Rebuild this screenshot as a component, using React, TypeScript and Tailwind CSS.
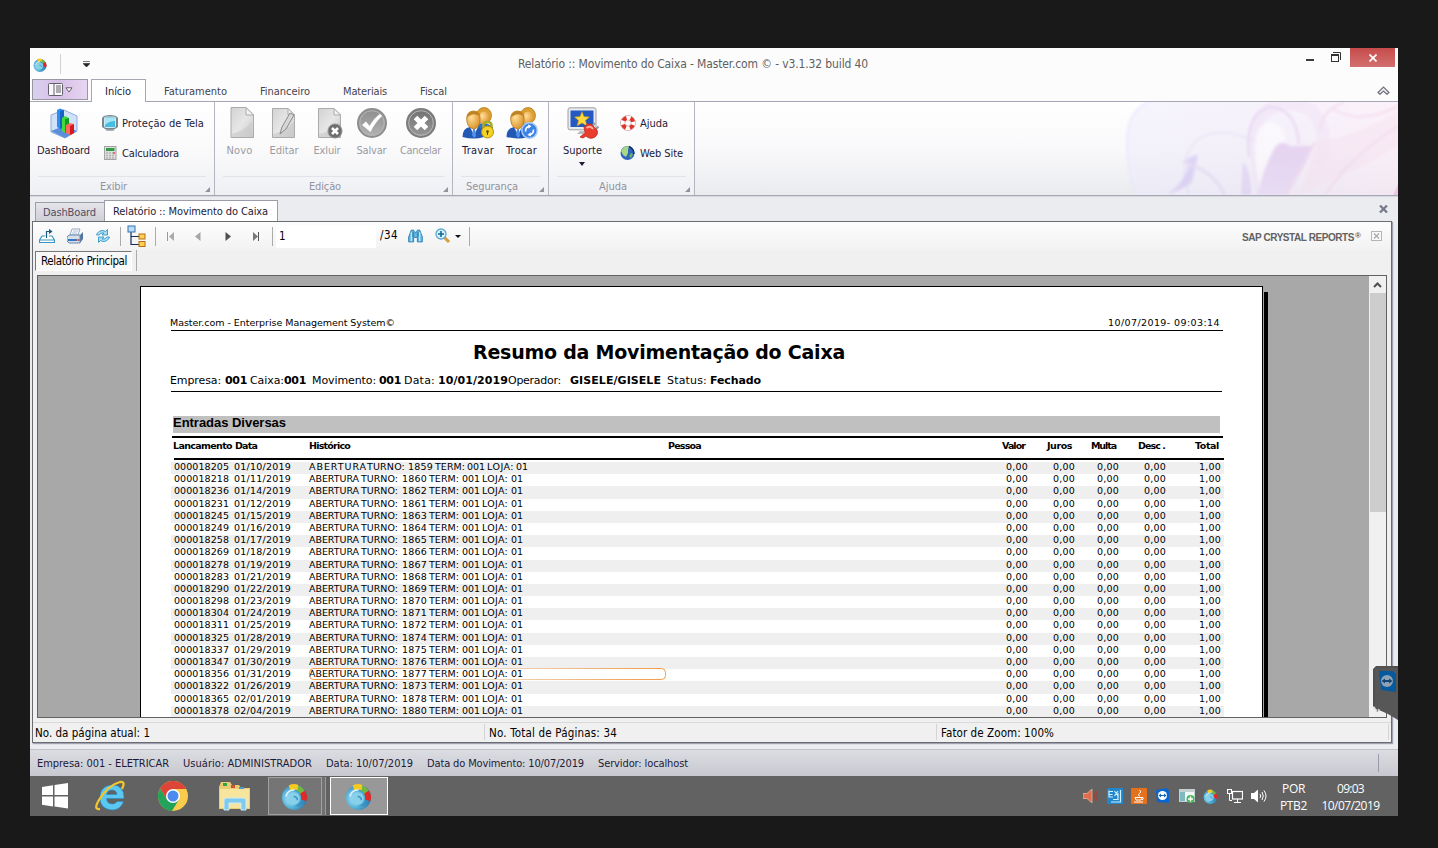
import { useLayoutEffect, useRef, useState } from "react";
import type { ReactNode } from "react";

/* Text spread evenly over the width that its class gives. */
function Fit({ children, className = "" }: { children: string; className?: string }) {
  const box = useRef<HTMLSpanElement>(null);
  const inner = useRef<HTMLSpanElement>(null);
  const [spacing, setSpacing] = useState(0);
  useLayoutEffect(() => {
    if (!box.current || !inner.current) return;
    inner.current.style.letterSpacing = "0px";
    const natural = inner.current.getBoundingClientRect().width;
    const gap = (box.current.clientWidth - natural) / children.length;
    inner.current.style.letterSpacing = gap + "px";
    setSpacing(gap);
  }, [children]);
  return (
    <span ref={box} className={"block shrink-0 whitespace-nowrap " + className}>
      <span ref={inner} style={{ letterSpacing: spacing }}>{children}</span>
    </span>
  );
}

function Ball({ className }: { className: string }) {
  return (
    <svg viewBox="0 0 28 28" className={className}>
      <defs>
        <radialGradient id="ball" cx="35%" cy="55%" r="70%">
          <stop offset="0" stopColor="#bfeaf8" />
          <stop offset=".5" stopColor="#58b4da" />
          <stop offset="1" stopColor="#1d6ea6" />
        </radialGradient>
      </defs>
      <circle cx="14" cy="15" r="13" fill="url(#ball)" />
      <path d="M14 8 Q21 9 21 16 Q20 22 13 24 Q22 25 26 19 L25 9 L18 5 L10 5Z" fill="#2f86bb" opacity=".6" />
      <path d="M8 2.500 Q13 0 18 2 L18 8 Q14 6 10 8.500Z" fill="#f6c921" />
      <path d="M18 2.500 Q23 4.500 25 9 L20 12 Q19 9 17 8Z" fill="#74b543" />
      <path d="M24.500 8 Q29 14 26 19 L21 17 Q21 13 20 11Z" fill="#e02a25" />
      <circle cx="13" cy="16" r="6.500" fill="#86d0ea" />
      <path d="M5 14 Q7 7 14 7" fill="none" stroke="#d8f3fb" strokeWidth="1.800" />
      <path d="M13 14 Q17 14 17 18" fill="none" stroke="#4196c2" strokeWidth="1.600" />
    </svg>
  );
}

function DashIcon() {
  return (
    <svg viewBox="0 0 32 32" className="h-8 w-8">
      <path d="M3 8 L16 3 L29 9 L29 24 L17 31 L3 25Z" fill="#cfe2fa" stroke="#8fa9dc" />
      <path d="M3 24 L16 19 L29 24 L17 31Z" fill="#5a8ddc" />
      <path d="M9 3 L12 1.500 L16 3 L16 20 L12 22 L9 20Z" fill="#2f8df0" />
      <path d="M12 4 L16 3 L16 20 L12 22Z" fill="#1663c4" />
      <path d="M14 11 L17 9 L21 11 L21 24 L17 26 L14 24Z" fill="#3fdc3f" />
      <path d="M17 12 L21 11 L21 24 L17 26Z" fill="#139a20" />
      <path d="M18 18 L22 16 L26 17 L26 26 L22 28 L18 26Z" fill="#ff6a5c" />
      <path d="M22 19 L26 17 L26 26 L22 28Z" fill="#d8161b" />
    </svg>
  );
}

function PageIcon({ kind }: { kind: "new" | "edit" | "delete" }) {
  return (
    <svg viewBox="0 0 32 32" className="h-8 w-8">
      <defs>
        <linearGradient id="paper" x1="0" y1="0" x2="1" y2="1">
          <stop offset="0" stopColor="#d2d2d2" />
          <stop offset=".5" stopColor="#e6e6e6" />
          <stop offset="1" stopColor="#c9c9c9" />
        </linearGradient>
      </defs>
      <path d={kind === "new" ? "M5 .5 H20 L27.500 8 V30.500 H5Z" : "M4.500 1.500 H20 L26.500 8 V30.500 H4.500Z"} fill="url(#paper)" stroke="#ababab" />
      <path d={kind === "new" ? "M20 .5 V8 H27.500Z" : "M20 1.500 V8 H26.500Z"} fill="#f3f3f3" stroke="#ababab" />
      <path d="M5 27 Q18 25 26 14 V30 H5Z" fill="#c6c6c6" opacity=".55" />
      {kind === "edit" && (
        <path d="M22 6 L26 8 L18 22 L12 27 L14 20Z" fill="#d7d7d7" stroke="#8b8b8b" />
      )}
      {kind === "delete" && (
        <g>
          <circle cx="21" cy="24" r="7" fill="#6d6d6d" stroke="#919191" />
          <path d="M18 21 L24 27 M24 21 L18 27" stroke="#fff" strokeWidth="2.600" />
        </g>
      )}
    </svg>
  );
}

function RoundIcon({ ok }: { ok: boolean }) {
  return (
    <svg viewBox="0 0 32 32" className="h-8 w-8">
      <defs>
        <linearGradient id={ok ? "ringA" : "ringB"} x1="0" y1="0" x2="0" y2="1">
          <stop offset="0" stopColor={ok ? "#8d8d8d" : "#707070"} />
          <stop offset="1" stopColor={ok ? "#b4b4b4" : "#999"} />
        </linearGradient>
      </defs>
      <circle cx="16" cy="16" r="14" fill={ok ? "url(#ringA)" : "url(#ringB)"} stroke={ok ? "#8e8e8e" : "#7d7d7d"} strokeWidth="2" />
      <circle cx="16" cy="16" r="12.300" fill="none" stroke="#b8b8b8" />
      {ok ? (
        <path d="M6 18 L10 14.500 L13.500 19 Q18 11 24 7 L26 9 Q18 17 14.500 25Z" fill="#fff" />
      ) : (
        <path d="M10.500 10.500 L21.500 21.500 M21.500 10.500 L10.500 21.500" stroke="#fff" strokeWidth="5" />
      )}
    </svg>
  );
}

function PeopleIcon({ lock }: { lock: boolean }) {
  return (
    <svg viewBox="0 0 32 32" className="h-8 w-8">
      <defs>
        <radialGradient id="face" cx="35%" cy="35%" r="75%">
          <stop offset="0" stopColor="#ffe09a" />
          <stop offset="1" stopColor="#d98d22" />
        </radialGradient>
      </defs>
      <path d="M14 18 Q22 13 31 20 V26 H14Z" fill="#3271ce" />
      <ellipse cx="22" cy="8.500" rx="7.500" ry="8" fill="#dba02f" stroke="#a87216" strokeWidth=".7" />
      <ellipse cx="22" cy="11" rx="5.500" ry="6.500" fill="url(#face)" />
      <path d="M.5 30 Q.5 21 8 20 L16 20 Q23 22 22 30 Q12 33 .5 30Z" fill="#2359b4" />
      <path d="M8 20 L12 28 L16 20Z" fill="#fff" />
      <path d="M11 22 L13 22 L14 29 L12 31 L10 28Z" fill="#4f92ea" />
      <path d="M5 15 Q3 5 11 4 Q18 4 18 12 Q18 21 12 22 Q6 21 5 15Z" fill="url(#face)" stroke="#b67a1b" strokeWidth=".8" />
      <path d="M5 11 Q5 4 12 4 Q17 4 18 9 Q12 6 9 8 Q6 9 5 11Z" fill="#c08222" />
      {lock ? (
        <g>
          <path d="M21.500 21 V18.500 Q21.500 15 25.500 15 Q29.500 15 29.500 18.500 V21" fill="none" stroke="#a3ad2a" strokeWidth="2.500" />
          <circle cx="25.500" cy="25" r="6" fill="#f4d324" stroke="#b8930f" />
          <circle cx="25.500" cy="24.500" r="1.300" fill="#5e4706" /><path d="M25 24.500 h1 v3.500 h-1Z" fill="#5e4706" />
        </g>
      ) : (
        <g>
          <circle cx="23.500" cy="23.500" r="7.700" fill="#3d83e6" stroke="#a6ccfa" strokeWidth="1.500" />
          <path d="M19.500 24.500 Q19.500 20 23 19.500 M27.500 22.500 Q27.500 27 24 27.500" fill="none" stroke="#fff" strokeWidth="1.600" />
          <path d="M22 17.500 L25.500 19 L22.500 21.800Z M25 29.500 L21.500 28 L24.500 25.200Z" fill="#fff" />
        </g>
      )}
    </svg>
  );
}

function SupportIcon() {
  return (
    <svg viewBox="0 0 32 32" className="h-8 w-8">
      <rect x="1" y=".8" width="28" height="22" rx="2" fill="#e9ebec" stroke="#9ba0a5" />
      <rect x="3.500" y="3.500" width="23" height="16.500" fill="#2459c4" />
      <path d="M15 4.500 L17 9.500 L22.500 10 L18.500 13.500 L20 19 L15 16 L10 19 L11.500 13.500 L7.500 10 L13 9.500Z" fill="#ffd83d" stroke="#b78e11" strokeWidth=".6" />
      <path d="M13 24 H17 V27 H10Z" fill="#b9bcc0" />
      <path d="M28 16 L24.500 20 M31.500 19.500 L28 23" stroke="#9a9a9a" strokeWidth="2" />
      <path d="M17 20 Q20 16 24 17 L30 23 Q32 27 28 30 Q23 33 19 29 L16 31 L13 30 L18 26Z" fill="#e93d2e" stroke="#c02a1f" strokeWidth=".8" />
      <path d="M19.500 21 Q23 18 26 22" fill="none" stroke="#ffb0a0" strokeWidth="2" />
    </svg>
  );
}

function BigButton({ icon, label, className, labelClass, off }: { icon: ReactNode; label: string; className: string; labelClass: string; off?: boolean }) {
  return (
    <button className={"flex shrink-0 flex-col items-center pt-[5px] " + className}>
      {icon}
      <Fit className={"mt-[5px] h-[14px] text-[11px] leading-[14px] " + (off ? "text-[#9b9ba3] " : "text-[#1d1a38] ") + labelClass}>{label}</Fit>
    </button>
  );
}

function Group({ caption, captionClass, className, children }: { caption: string; captionClass: string; className: string; children: ReactNode }) {
  return (
    <section className={"flex h-[93px] shrink-0 flex-col border-r border-[#b3b5c0] bg-gradient-to-b from-white via-[#fafafb] to-[#eff0f4] " + className}>
      <div className="flex h-[74px]">{children}</div>
      <div className="mx-2 h-px bg-[#e2e3e9]" />
      <div className="flex h-[18px] justify-between pr-[4px]">
        <Fit className={"pt-[2px] text-[11px] leading-[16px] text-[#92929f] " + captionClass}>{caption}</Fit>
        <svg viewBox="0 0 5 5" className="mt-[10px] h-[5px] w-[5px]"><path d="M5 0 V5 H0Z" fill="#92929e" /></svg>
      </div>
    </section>
  );
}

function Ribbon() {
  return (
    <div className="flex h-[94px] border-b border-[#a5a7b4] bg-gradient-to-b from-white via-[#f9f9fb] to-[#eaebef]">
      <Group caption="Exibir" captionClass="ml-[70px] w-[27px]" className="w-[185px]">
        <BigButton icon={<DashIcon />} label="DashBoard" className="ml-[7px] w-[53px]" labelClass="w-[53px]" />
        <div className="ml-[12px] flex flex-col">
          <div className="mt-[13px] flex h-4 items-center">
            <svg viewBox="0 0 16 16" className="h-4 w-4">
              <path d="M2 1 Q8 -1 14 1 L16 3 V12 L13 14 Q8 17 3 14 L0 12 V3Z" fill="#78868d" />
              <rect x="2.500" y="2" width="11" height="10.500" rx="1" fill="#48bde2" stroke="#d0e8ef" />
              <path d="M3 3 H13 V6 Q7 6 3 10Z" fill="#a6e5f5" />
              <path d="M4 15 H12" stroke="#a0a9ad" strokeWidth="1.500" />
            </svg>
            <Fit className="ml-1 w-[82px] pt-[2px] text-[11px] text-[#1d1a38]">Proteção de Tela</Fit>
          </div>
          <div className="mt-[14px] flex h-4 items-center">
            <svg viewBox="0 0 16 16" className="h-4 w-4">
              <rect x="2.500" y="1.500" width="11.500" height="13" fill="#dedede" stroke="#a3a3a3" />
              <rect x="4" y="3" width="8.500" height="3" fill="#2f9c43" />
              <path d="M4 8 H13 M4 10.500 H13 M4 13 H13" stroke="#b3b3b3" strokeDasharray="2 1" strokeWidth="1.500" />
              <path d="M11 8 H13" stroke="#e05555" strokeWidth="1.500" />
            </svg>
            <Fit className="ml-1 w-[57px] pt-[2px] text-[11px] text-[#1d1a38]">Calculadora</Fit>
          </div>
        </div>
      </Group>
      <Group caption="Edição" captionClass="ml-[94px] w-[32px]" className="w-[238px]">
        <BigButton off icon={<PageIcon kind="new" />} label="Novo" className="ml-[8px] w-[38px]" labelClass="mr-[5px] w-[26px]" />
        <BigButton off icon={<PageIcon kind="edit" />} label="Editar" className="ml-[4px] w-[38px]" labelClass="w-[29px]" />
        <BigButton off icon={<PageIcon kind="delete" />} label="Exluir" className="ml-[8px] w-[38px]" labelClass="mr-[6px] w-[27px]" />
        <BigButton off icon={<RoundIcon ok />} label="Salvar" className="ml-[3px] w-[40px]" labelClass="mr-px w-[30px]" />
        <BigButton off icon={<RoundIcon ok={false} />} label="Cancelar" className="ml-[7px] w-[44px]" labelClass="mr-px w-[41px]" />
      </Group>
      <Group caption="Segurança" captionClass="ml-[13px] w-[52px]" className="w-[96px]">
        <BigButton icon={<PeopleIcon lock />} label="Travar" className="ml-[7px] w-[36px]" labelClass="w-[32px]" />
        <BigButton icon={<PeopleIcon lock={false} />} label="Trocar" className="ml-[7px] w-[37px]" labelClass="w-[31px]" />
      </Group>
      <Group caption="Ajuda" captionClass="ml-[50px] w-[28px]" className="w-[146px]">
        <div className="flex flex-col items-center">
          <BigButton icon={<SupportIcon />} label="Suporte" className="ml-[12px] w-[43px]" labelClass="w-[39px]" />
          <svg viewBox="0 0 6 4" className="ml-[11px] mt-[4px] h-1 w-1.5"><path d="M0 0 H6 L3 4Z" fill="#1d1a38" /></svg>
        </div>
        <div className="ml-[16px] flex flex-col">
          <div className="mt-[13px] flex h-4 items-center">
            <svg viewBox="0 0 16 16" className="h-4 w-4">
              <circle cx="8" cy="8" r="5.300" fill="none" stroke="#c08c8c" strokeWidth="5" />
              <circle cx="8" cy="8" r="5.300" fill="none" stroke="#fff" strokeWidth="4" />
              <circle cx="8" cy="8" r="5.300" fill="none" stroke="#df3428" strokeWidth="4" strokeDasharray="4.160 4.160" strokeDashoffset="-2" />
            </svg>
            <Fit className="ml-[4px] w-[28px] pt-[2px] text-[11px] text-[#1d1a38]">Ajuda</Fit>
          </div>
          <div className="mt-[14px] flex h-4 items-center">
            <svg viewBox="0 0 16 16" className="h-4 w-4">
              <circle cx="7.500" cy="8" r="7" fill="#2f65bd" />
              <path d="M1 6 Q4 0 9 1.500 L8 5 L8 8 L6 12 L3 10 Z" fill="#a7d885" />
              <path d="M11 8 L13 9 L11 13 L9 11Z" fill="#6ab75b" />
              <path d="M9 1.500 Q14 4 14 9" fill="none" stroke="#12356f" strokeWidth="1.500" />
            </svg>
            <Fit className="ml-[4px] w-[43px] pt-[2px] text-[11px] text-[#1d1a38]">Web Site</Fit>
          </div>
        </div>
      </Group>
      <svg viewBox="0 0 293 93" className="ml-auto h-[93px] w-[293px] opacity-75">
        <defs>
          <linearGradient id="veil" x1="0" y1="0" x2="1" y2="0">
            <stop offset="0" stopColor="#edebfb" />
            <stop offset=".6" stopColor="#efe6f8" />
            <stop offset="1" stopColor="#fae5f3" />
          </linearGradient>
          <linearGradient id="fold" x1="0" y1="0" x2="0" y2="1">
            <stop offset="0" stopColor="#dfc6ee" />
            <stop offset="1" stopColor="#e6d6f4" />
          </linearGradient>
          <filter id="mist"><feGaussianBlur stdDeviation="1.400" /></filter>
        </defs>
        <path d="M42 0 Q20 12 22 45 Q23 75 32 93 H293 V0Z" fill="url(#veil)" opacity=".7" />
        <path d="M42 0 Q20 12 22 45 Q23 75 32 93" fill="none" stroke="#e8e4fb" strokeWidth="2" filter="url(#mist)" />
        <path d="M84 93 Q72 52 95 36 Q120 24 150 40" fill="none" stroke="#ded9f2" strokeWidth="1.500" filter="url(#mist)" />
        <path d="M56 93 Q74 82 79 62 Q74 58 68 66 Q80 52 88 53 Q84 72 82 80 Q72 88 56 93Z" fill="#cfc0f2" opacity=".8" filter="url(#mist)" transform="translate(5 0)" />
        <path d="M80 62 Q106 66 120 93" fill="none" stroke="#e0d6f0" strokeWidth="3" filter="url(#mist)" />
        <path d="M160 93 Q142 28 158 12 Q180 -6 206 8 Q226 28 214 62" fill="none" stroke="#ecdcf3" strokeWidth="13" opacity=".6" filter="url(#mist)" />
        <path d="M144 55 Q139 14 164 5 Q191 6 194 42" fill="none" stroke="#dfc8ec" strokeWidth="2" filter="url(#mist)" />
        <path d="M156 93 Q139 20 167 20 Q181 24 180 42 Q171 55 157 93Z" fill="#fbf9fd" opacity=".8" filter="url(#mist)" />
        <path d="M152 93 Q162 55 172 43 Q178 38 185 44 H208 Q200 65 181 93Z" fill="url(#fold)" filter="url(#mist)" />
        <path d="M138 60 Q146 68 146 93 H136Z" fill="#d9c9f1" opacity=".8" filter="url(#mist)" />
        <path d="M210 40 Q250 35 293 9 V44 Q250 70 195 93" fill="#f4dded" opacity=".6" filter="url(#mist)" />
        <path d="M216 28 Q216 8 240 0 M228 7 Q255 24 293 4 M220 93 Q245 55 293 24 M210 40 L181 93" fill="none" stroke="#f0d0e8" strokeWidth="2" filter="url(#mist)" />
        <path d="M293 82 L288 93 H293Z" fill="#efbde2" />
      </svg>
    </div>
  );
}

function Separator({ className }: { className: string }) {
  return <span className={"block w-px shrink-0 " + className} />;
}

function Toolbar() {
  return (
    <div className="flex h-[28px] items-center bg-gradient-to-b from-[#fdfdfd] to-[#f2f2f2]">
      <svg viewBox="0 0 16 16" className="ml-[6px] h-4 w-4 shrink-0"><path d="M6 8 H3 L.5 12 V14.500 H15.500 V12 L13 8 H10 M.5 12 H15" fill="#fff" stroke="#3a95c4" strokeWidth="1.200" /><path d="M7.500 10 V3.500 H11" fill="none" stroke="#1f5b80" strokeWidth="1.200" /><path d="M10 .8 L13.500 3.500 L10 6.200Z" fill="#1f5b80" /></svg>
      <svg viewBox="0 0 16 16" className="ml-[12px] h-4 w-4 shrink-0"><path d="M5 1 H13 L11 7 H3Z" fill="#fff" stroke="#9aa9bf" /><path d="M6 3 H11 M5 5 H10" stroke="#a5bfdf" /><path d="M2 7 H13 L16 4 V11 L13 15 H2 L0 13 V9Z" fill="#51759f" /><path d="M2 7 H13 V15 H2 L0 13 V9Z" fill="#d5dfeb" stroke="#6d88ab" /><path d="M1 12 H10" stroke="#3776c2" strokeWidth="2" /><path d="M10.500 12 h2" stroke="#cf5038" strokeWidth="2" /></svg>
      <svg viewBox="0 0 16 16" className="ml-[12px] h-4 w-4 shrink-0"><path d="M1.500 7 Q3 2.500 8 2.500 L10.500 3.500 L12.500 1.500 V7 H7 L9 5 Q5.500 4.500 4 7Z M14.500 9 Q13 13.500 8 13.500 L5.500 12.500 L3.500 14.500 V9 H9 L7 11 Q10.500 11.500 12 9Z" fill="#a9def4" stroke="#3597c4" strokeWidth=".9" /></svg>
      <Separator className="ml-[9px] h-[19px] bg-[#ababab]" />
      <svg viewBox="0 0 20 22" className="ml-[6px] h-[22px] w-5 shrink-0"><path d="M4 7 V19.500 H12 M4 11.500 H12" fill="none" stroke="#162a60" strokeWidth="1.200" /><rect x="1" y="1" width="7" height="6" fill="#b9dcf8" stroke="#3870aa" /><rect x="12" y="9" width="6" height="5" fill="#ffd052" stroke="#b96d13" /><rect x="12" y="16.500" width="6" height="5" fill="#ffd052" stroke="#b96d13" /></svg>
      <Separator className="ml-[8px] h-[19px] bg-[#ababab]" />
      <svg viewBox="0 0 8 9" className="ml-[11px] h-[9px] w-2 shrink-0"><path d="M.5 0 V9" stroke="#999" /><path d="M7 0 V9 L2 4.500Z" fill="#aaa" /></svg>
      <svg viewBox="0 0 6 9" className="ml-[20px] h-[9px] w-1.5 shrink-0"><path d="M5.500 0 V9 L0 4.500Z" fill="#a5a5a5" /></svg>
      <svg viewBox="0 0 6 9" className="ml-[24px] h-[9px] w-1.5 shrink-0"><path d="M.5 0 V9 L6 4.500Z" fill="#505050" /></svg>
      <svg viewBox="0 0 8 9" className="ml-[21px] h-[9px] w-2 shrink-0"><path d="M1 0 V9 L6 4.500Z" fill="#777" /><path d="M6.500 0 V9" stroke="#555" /></svg>
      <Separator className="ml-[12px] h-[19px] bg-[#ababab]" />
      <span className="ml-[3px] h-[23px] w-[100px] bg-white pl-[3px] text-[11.500px] leading-[22px]">1</span>
      <Fit className="ml-[4px] w-[18px] text-[11.500px]">/34</Fit>
      <svg viewBox="0 0 16 14" className="ml-[10px] h-[14px] w-[15px] shrink-0"><path d="M3.500 .7 H6 L7 3 H9 L10 .7 H12.500 L15.300 8 V13.300 H10 V8.500 H6 V13.300 H.7 V8Z" fill="#63b6de" stroke="#2f82b4" /><path d="M3.500 3 V12.500 M12.500 3 V12.500" stroke="#c8eafa" strokeWidth="1.300" /><path d="M5.500 3 V8 M10.500 3 V8" stroke="#1d6798" /></svg>
      <svg viewBox="0 0 16 16" className="ml-[12px] h-4 w-4 shrink-0"><path d="M9 9 L14 14" stroke="#d99c3a" strokeWidth="3" /><circle cx="6" cy="6" r="5" fill="#d9f1fc" stroke="#5ca8d2" strokeWidth="1.300" /><path d="M3 6 H9 M6 3 V9" stroke="#166995" strokeWidth="1.600" /></svg>
      <svg viewBox="0 0 6 3" className="ml-[4px] h-[3px] w-1.5 shrink-0"><path d="M0 0 H6 L3 3Z" fill="#111" /></svg>
      <Separator className="ml-[8px] h-[19px] bg-[#ababab]" />
      <Fit className="ml-auto w-[112px] pt-[3px] font-['Liberation_Sans'] text-[10px] font-bold text-[#626262]">SAP CRYSTAL REPORTS</Fit>
      <Fit className="ml-px w-[6px] font-['Liberation_Sans'] text-[8px] font-bold text-[#626262]">®</Fit>
      <svg viewBox="0 0 11 10" className="ml-[10px] mr-[9px] h-[10px] w-[11px] shrink-0"><rect x=".5" y=".5" width="10" height="9" fill="#f8f8f8" stroke="#b5b5b5" /><path d="M3 2.500 L8 7.500 M8 2.500 L3 7.500" stroke="#aaa" strokeWidth="1.300" /></svg>
    </div>
  );
}

const ENTRIES: [string, string, string][] = [
  ["000018205", "01/10/2019", "1859"],
  ["000018218", "01/11/2019", "1860"],
  ["000018236", "01/14/2019", "1862"],
  ["000018231", "01/12/2019", "1861"],
  ["000018245", "01/15/2019", "1863"],
  ["000018249", "01/16/2019", "1864"],
  ["000018258", "01/17/2019", "1865"],
  ["000018269", "01/18/2019", "1866"],
  ["000018278", "01/19/2019", "1867"],
  ["000018283", "01/21/2019", "1868"],
  ["000018290", "01/22/2019", "1869"],
  ["000018298", "01/23/2019", "1870"],
  ["000018304", "01/24/2019", "1871"],
  ["000018311", "01/25/2019", "1872"],
  ["000018325", "01/28/2019", "1874"],
  ["000018337", "01/29/2019", "1875"],
  ["000018347", "01/30/2019", "1876"],
  ["000018356", "01/31/2019", "1877"],
  ["000018322", "01/26/2019", "1873"],
  ["000018365", "02/01/2019", "1878"],
  ["000018378", "02/04/2019", "1880"],
];

const HIGHLIGHTED = "000018356";

function Entry({ entry, index }: { entry: [string, string, string]; index: number }) {
  const first = index === 0;
  return (
    <div className={"flex h-[12.200px] w-[1053px] shrink-0 pl-[3px] text-[9.500px] leading-[10px] " + (index % 2 === 0 ? "bg-[#efefef]" : "")}>
      <Fit className="w-[55px]">{entry[0]}</Fit>
      <Fit className="ml-[5px] w-[57px]">{entry[1]}</Fit>
      <div className="relative ml-[18px] flex w-[692px]">
        <Fit className={first ? "w-[58px]" : "w-[50px]"}>ABERTURA</Fit>
        <Fit className={first ? "w-[38px]" : "ml-[2px] w-[37px]"}>TURNO:</Fit>
        <Fit className={first ? "ml-[3px] w-[25px]" : "ml-[4px] w-[25px]"}>{entry[2]}</Fit>
        <Fit className="ml-[2px] w-[30px]">TERM:</Fit>
        <Fit className={first ? "ml-[2px] w-[18px]" : "ml-[3px] w-[18px]"}>001</Fit>
        <Fit className={first ? "ml-[2px] w-[27px]" : "ml-[2px] w-[26px]"}>LOJA:</Fit>
        <Fit className={first ? "ml-[2px] w-[12px]" : "ml-[3px] w-[12px]"}>01</Fit>
        {entry[0] === HIGHLIGHTED && (
          <svg viewBox="0 0 357 12" className="absolute -top-px left-0 h-[12px] w-[357px]">
            <defs>
              <linearGradient id="glow" gradientUnits="userSpaceOnUse" x1="0" y1="0" x2="357" y2="0">
                <stop offset="0" stopColor="#f29a45" />
                <stop offset=".5" stopColor="#f0d9c2" />
                <stop offset="1" stopColor="#f29a45" />
              </linearGradient>
            </defs>
            <rect x=".5" y=".5" width="356" height="11" rx="4" fill="none" stroke="url(#glow)" />
          </svg>
        )}
      </div>
      <Fit className="ml-[5px] w-[22px]">0,00</Fit>
      <Fit className="ml-[25px] w-[22px]">0,00</Fit>
      <Fit className="ml-[22px] w-[22px]">0,00</Fit>
      <Fit className="ml-[25px] w-[22px]">0,00</Fit>
      <Fit className="ml-[33px] w-[22px]">1,00</Fit>
    </div>
  );
}

function Report() {
  return (
    <article className="ml-[102px] mt-[10px] flex h-[440px] w-[1123px] shrink-0 flex-col border-x border-t border-black bg-white pl-[30px] font-['DejaVu_Sans',sans-serif] text-black [font-stretch:normal]">
      <div className="flex h-[44px] w-[1052px] items-end border-b border-black pb-px text-[9.500px] leading-[12px]">
        <Fit className="-ml-px w-[225px]">Master.com - Enterprise Management System©</Fit>
        <Fit className="ml-auto mr-[3px] w-[112px]">10/07/2019- 09:03:14</Fit>
      </div>
      <div className="flex h-[42px]">
        <Fit className="ml-[302px] mt-[9px] w-[372px] text-[19px] font-bold leading-[24px]">Resumo da Movimentação do Caixa</Fit>
      </div>
      <div className="flex h-[19px] w-[1051px] border-b border-black text-[11px] leading-[16px]">
        <Fit className="-ml-px w-[51px]">Empresa:</Fit>
        <Fit className="ml-[4px] w-[22px] font-bold">001</Fit>
        <Fit className="ml-[3px] w-[34px]">Caixa:</Fit>
        <Fit className="w-[22px] font-bold">001</Fit>
        <Fit className="ml-[6px] w-[64px]">Movimento:</Fit>
        <Fit className="ml-[3px] w-[22px] font-bold">001</Fit>
        <Fit className="ml-[3px] w-[31px]">Data:</Fit>
        <Fit className="ml-[3px] w-[70px] font-bold">10/01/2019</Fit>
        <Fit className="w-[53px]">Operador:</Fit>
        <Fit className="ml-[9px] w-[91px] font-bold">GISELE/GISELE</Fit>
        <Fit className="ml-[6px] w-[40px]">Status:</Fit>
        <Fit className="ml-[3px] w-[51px] font-bold">Fechado</Fit>
      </div>
      <div className="ml-[2px] mt-[24px] flex h-[17px] w-[1047px] shrink-0 bg-[#c0c0c0] font-['Liberation_Sans'] text-[13px] font-bold leading-[13px]">
        <Fit className="w-[113px]">Entradas Diversas</Fit>
      </div>
      <div className="ml-px mt-[3px] h-[2px] w-[1051px] shrink-0 bg-black" />
      <div className="flex h-[20px] shrink-0 pl-[2px] text-[9.500px] font-bold leading-[16px]">
        <Fit className="w-[59px]">Lancamento</Fit>
        <Fit className="ml-[3px] w-[22px]">Data</Fit>
        <Fit className="ml-[52px] w-[41px]">Histórico</Fit>
        <Fit className="ml-[318px] w-[33px]">Pessoa</Fit>
        <Fit className="ml-[301px] w-[23px]">Valor</Fit>
        <Fit className="ml-[22px] w-[25px]">Juros</Fit>
        <Fit className="ml-[19px] w-[25px]">Multa</Fit>
        <Fit className="ml-[22px] w-[27px]">Desc .</Fit>
        <Fit className="ml-[30px] w-[24px]">Total</Fit>
      </div>
      <div className="ml-[3px] h-[2px] w-[1050px] shrink-0 bg-black" />
      <div className="mt-[2px] flex flex-col">
        {ENTRIES.map((entry, index) => <Entry key={entry[0]} entry={entry} index={index} />)}
      </div>
    </article>
  );
}

function Viewer() {
  return (
    <div className="ml-[4px] flex h-[443px] w-[1350px] border border-[#626262] bg-[#a8a8a8]">
      <div className="flex h-full w-[1331px] overflow-hidden">
        <Report />
        <div className="ml-px mt-[16px] h-[440px] w-[4px] shrink-0 bg-black" />
      </div>
      <div className="flex w-[17px] flex-col bg-[#f0f0f0]">
        <svg viewBox="0 0 17 17" className="h-[17px] w-[17px]"><path d="M5 11 L8.500 7.500 L12 11" fill="none" stroke="#505050" strokeWidth="2" /></svg>
        <div className="ml-px h-[219px] bg-[#cdcdcd]" />
      </div>
    </div>
  );
}

function Tray() {
  return (
    <div className="ml-auto flex items-center">
      <svg viewBox="0 0 16 16" className="h-4 w-4"><path d="M0 5.500 H4 L9 1 V15 L4 10.500 H0Z" fill="#df6e4f" stroke="#ffb79d" strokeWidth=".7" /><path d="M11 5 Q13 8 11 11 M13 3 Q16 8 13 13" fill="none" stroke="#a3402c" /></svg>
      <svg viewBox="0 0 16 16" className="ml-[8px] h-4 w-4"><rect width="16" height="16" rx="1" fill="#2286cc" /><path d="M2 3.500 H6 M2 6.500 H5.500 M2 2.500 V9 H6 M7.500 3 L11 8 M11 3 L7.500 8 M13.500 2 V14 H4 M6 11.500 H11 V5" fill="none" stroke="#cdf1ff" strokeWidth="1.200" /></svg>
      <svg viewBox="0 0 16 16" className="ml-[8px] h-4 w-4"><rect width="16" height="16" rx="1" fill="#e5711c" /><path d="M8.500 2 Q11 4 8.500 5.500 Q6.500 7 8.500 8.500 M4 9.500 H11 L10 12 H5Z M3 14 H12 M11 9.500 Q14 9.500 11 12" fill="none" stroke="#fff" /></svg>
      <svg viewBox="0 0 16 16" className="ml-[8px] h-4 w-4"><path d="M1 2 L12 0 L14 3 V15 L2 14Z" fill="#0b65d0" /><circle cx="7.500" cy="7.500" r="4.500" fill="#fff" /><path d="M3.500 7.500 L6 5.500 V7 H9 V5.500 L11.500 7.500 L9 9.500 V8 H6 V9.500Z" fill="#1465bb" /></svg>
      <svg viewBox="0 0 16 16" className="ml-[8px] h-4 w-4"><rect x=".5" y="1.500" width="15" height="12" fill="#f4f7f7" stroke="#c4d0d1" /><rect x="1" y="4" width="5" height="9" fill="#80bac1" /><path d="M1 3 H15" stroke="#93a9ac" /><circle cx="11.500" cy="11" r="4" fill="#4db55c" /><path d="M9 11 H14 M11.500 8.500 V13.500" stroke="#fff" strokeWidth="1.500" /></svg>
      <Ball className="ml-[8px] h-[15px] w-[15px]" />
      <svg viewBox="0 0 16 16" className="ml-[9px] h-4 w-4" fill="none" stroke="#fff"><rect x="5.500" y="3.500" width="10" height="7.500" strokeWidth="1.200" /><path d="M10.500 11 V14 M7 14.500 H14 M2.500 6 V12.500 H5" /><rect x=".5" y="1.500" width="4" height="4" fill="#666" /></svg>
      <svg viewBox="0 0 16 16" className="ml-[8px] h-4 w-4"><path d="M0 5 H3 L7 1.500 V14.500 L3 11 H0Z" fill="#fff" /><path d="M9 6 Q10.500 8 9 10 M11 4 Q13.500 8 11 12 M13 2.500 Q17 8 13 13.500" fill="none" stroke="#fff" /></svg>
      <div className="ml-[12px] flex w-[29px] flex-col items-center pt-px font-['Open_Sans',sans-serif] text-[12px] leading-[17px] text-white [font-stretch:normal]">
        <Fit className="w-[23px]">POR</Fit>
        <Fit className="w-[27px]">PTB2</Fit>
      </div>
      <div className="ml-[13px] mr-[18px] flex w-[59px] flex-col items-center pt-px font-['Open_Sans',sans-serif] text-[12px] leading-[17px] text-white [font-stretch:normal]">
        <Fit className="w-[27px]">09:03</Fit>
        <Fit className="w-[58px]">10/07/2019</Fit>
      </div>
    </div>
  );
}

function Taskbar() {
  return (
    <div className="flex h-[40px] items-center bg-[#626262]">
      <svg viewBox="0 0 26 26" className="ml-[12px] h-[26px] w-[26px]"><path d="M0 4 L11 2.200 V12 H0Z M12.500 2 L26 0 V12 H12.500Z M0 13.500 H11 V23.500 L0 21.800Z M12.500 13.500 H26 V25.500 L12.500 23.600Z" fill="#fff" /></svg>
      <svg viewBox="0 0 32 32" className="ml-[27px] h-8 w-8">
        <path d="M29 18.500 H11.500 Q12 24 17.500 24 Q20.500 24 22 21.500 H28.500 Q25.500 30 17 30 Q5 29 5 17.500 Q5 6 17 5 Q29 5 29 18.500Z M11.500 14.500 H22 Q21.500 10 17 10 Q12.500 10 11.500 14.500Z" fill="#5cc8f2" fillRule="evenodd" stroke="#238fc9" strokeWidth=".6" />
        <path d="M5 29 Q-2 30 4 20 Q13 5 25 2 Q31 1 27 9" fill="none" stroke="#f3c62c" strokeWidth="2.300" />
      </svg>
      <svg viewBox="0 0 30 30" className="ml-[31px] h-[30px] w-[30px]">
        <circle cx="15" cy="15" r="15" fill="#fbcb4b" />
        <path d="M15 8 H28.300 A15 15 0 0 0 2 7.500 L8.900 18.500 L15 15Z" fill="#dc4537" />
        <path d="M2 7.500 A15 15 0 0 0 14 30 L21 18.500 L15 15 L8.900 18.500Z" fill="#23a25b" />
        <circle cx="15" cy="15" r="7" fill="#fff" /><circle cx="15" cy="15" r="5.500" fill="#4b8bf0" />
      </svg>
      <svg viewBox="0 0 32 30" className="ml-[31px] h-[30px] w-8">
        <path d="M0 6 L2 1 H11 L13 4 H20 L22 7 H31 V28 H0Z" fill="#eacd70" />
        <path d="M4 2 h4 v3 h-4Z" fill="#37a345" /><path d="M12 4 h4 v3 h-4Z" fill="#c65438" /><path d="M20 6 h5 v3 h-5Z" fill="#4c9ad0" />
        <path d="M1 8 H30 V27 H1Z" fill="#f8e59d" /><path d="M5 29 V19 Q5 17 8 17 H24 Q27 17 27 19 V29 H22 V22 H10 V29Z" fill="#80caed" stroke="#c8edfb" />
      </svg>
      <div className="ml-[17px] flex h-[38px] w-[54px] items-center justify-center border border-[#a1a1a1] bg-[#757575]"><Ball className="mr-[2px] h-[27px] w-[27px]" /></div>
      <div className="h-[38px] w-[4px] border-r border-[#9a9a9a] bg-[#717171]" />
      <div className="ml-[4px] flex h-[38px] w-[58px] items-center justify-center border border-white bg-[#989898]"><Ball className="mr-[2px] h-[27px] w-[27px]" /></div>
      <Tray />
    </div>
  );
}

function TitleBar() {
  return (
    <header className="flex h-[31px] bg-[#fcfcfc]">
      <Ball className="ml-[3px] mt-[10px] h-[14px] w-[14px]" />
      <Separator className="ml-[13px] mt-[6px] h-[20px] bg-[#d2d2d2]" />
      <svg viewBox="0 0 7 6" className="ml-[22px] mt-[13px] h-1.5 w-[7px]"><path d="M0 .5 H7 M0 2.500 H7 L3.500 6Z" fill="#222" stroke="#222" strokeWidth=".6" /></svg>
      <Fit className="ml-[428px] mt-[8px] w-[350px] text-[12px] leading-[16px] text-[#606060]">Relatório :: Movimento do Caixa - Master.com © - v3.1.32 build 40</Fit>
      <span className="ml-[438px] mt-[11px] h-[2px] w-[8px] bg-[#3c3c3c]" />
      <svg viewBox="0 0 10 10" className="ml-[17px] mt-[4px] h-[10px] w-[10px]" fill="none" stroke="#333"><path d="M2 .5 H9.500 V8" /><rect x=".5" y="2.500" width="7" height="7" /><path d="M0 3 H8" strokeWidth="2" /></svg>
      <span className="ml-[9px] flex h-[19px] w-[45px] items-center justify-center bg-gradient-to-b from-[#c74b4b] to-[#d37070]">
        <svg viewBox="0 0 8 8" className="h-2 w-2"><path d="M.5 .5 L7.500 7.500 M7.500 .5 L.5 7.500" stroke="#fff" strokeWidth="1.700" /></svg>
      </span>
    </header>
  );
}

function RibbonTabs() {
  return (
    <nav className="flex h-[23px] bg-[#fcfcfc] text-[11px] text-[#454350] shadow-[inset_0_-1px_0_#a5a7b4]">
      <button className="ml-[2px] flex h-[21px] w-[56px] items-center border border-[#9a96a3] bg-gradient-to-r from-[#d9d0ee] via-[#d8bfe6] to-[#e6d6f2] pl-[15px]">
        <svg viewBox="0 0 15 13" className="h-[13px] w-[15px]"><rect x=".5" y=".5" width="14" height="12" rx="1" fill="#faf8fc" stroke="#625f69" /><path d="M6 1 V12 M8 3 H13 M8 5 H13 M8 7 H13 M8 9 H13" stroke="#625f69" /></svg>
        <svg viewBox="0 0 8 6" className="ml-[2px] h-1.5 w-2"><path d="M1 .8 H7 L4 5Z" fill="#fff" stroke="#625f69" /></svg>
      </button>
      <div className="ml-[3px] flex h-[23px] w-[55px] border-x border-t border-[#a5a7b4] bg-white">
        <Fit className="ml-[13px] w-[26px] leading-[24px] text-[#1d1a38]">Início</Fit>
      </div>
      <Fit className="ml-[18px] w-[63px] leading-[26px]">Faturamento</Fit>
      <Fit className="ml-[33px] w-[50px] leading-[26px]">Financeiro</Fit>
      <Fit className="ml-[33px] w-[44px] leading-[26px]">Materiais</Fit>
      <Fit className="ml-[33px] w-[27px] leading-[26px]">Fiscal</Fit>
      <svg viewBox="0 0 13 9" className="ml-auto mr-[8px] mt-[7px] h-[9px] w-[13px]"><path d="M1 6.500 L6.500 1 L12 6.500 L10 8.300 L6.500 5 L3 8.300Z" fill="#eef0f4" stroke="#74737d" strokeWidth="1.200" /></svg>
    </nav>
  );
}

function SideTab() {
  return (
    <svg viewBox="0 0 25 55" className="absolute left-[1343px] top-[618px] h-[55px] w-[25px]">
      <path d="M3 0 H25 V54 L15 48 L6 44 L4 46 L3 43 L0 40 V3Z" fill="#575757" />
      <path d="M1 40 V3 L3 1 H25" fill="none" stroke="#4a4a4a" />
      <path d="M1 41 L4 45 L7 43" fill="none" stroke="#d5d5d5" strokeWidth="1.500" strokeDasharray="2 1" />
      <path d="M6 5 H20 L23 8 V26 L8 24Z" fill="#07599f" />
      <circle cx="14" cy="15" r="6" fill="#8fa3b5" />
      <path d="M8.500 15 L12 12.500 V14 H16 V12.500 L19.500 15 L16 17.500 V16 H12 V17.500Z" fill="#164475" />
    </svg>
  );
}

export default function App() {
  return (
    <main className="h-[848px] w-[1438px] overflow-hidden bg-[#191919] pl-[30px] pt-[48px] font-['DejaVu_Sans_Condensed','DejaVu_Sans',sans-serif] [font-stretch:condensed]">
      <div className="relative flex h-[768px] w-[1368px] flex-col bg-[#ebecef]">
        <TitleBar />
        <RibbonTabs />
        <Ribbon />
        <div className="flex h-[25px] items-end border-t border-[#d7d8dd] bg-[#ebecef] text-[11px]">
          <div className="ml-[5px] flex h-[19px] w-[69px] border-l border-t border-[#9b9da9] bg-gradient-to-b from-[#e4e4e9] to-[#cfcfd6]">
            <Fit className="ml-[7px] w-[53px] leading-[19px] text-[#514e63]">DashBoard</Fit>
          </div>
          <div className="flex h-[21px] w-[174px] border-x border-t border-[#9b9da9] bg-white">
            <Fit className="ml-[8px] w-[155px] leading-[21px] text-[#1d1a38]">Relatório :: Movimento do Caixa</Fit>
          </div>
          <svg viewBox="0 0 9 8" className="mb-[8px] ml-auto mr-[10px] h-2 w-[9px]"><path d="M1 .5 L8 7.500 M8 .5 L1 7.500" stroke="#777b89" strokeWidth="2.300" /></svg>
        </div>
        <div className="ml-[2px] flex h-[522px] w-[1360px] flex-col border border-[#6b6b72] bg-[#f0f0f0] shadow-[1px_1px_1px_#9fa1b0]">
          <Toolbar />
          <div className="flex h-[25px] shrink-0">
            <div className="ml-[2px] mt-px flex h-[20px] w-[97px] border border-b-white border-l-[#777] border-r-white border-t-[#777] bg-[#f8f8f8]">
              <Fit className="ml-[5px] w-[86px] text-[11.500px] leading-[18px]">Relatório Principal</Fit>
            </div>
            <Separator className="ml-[4px] h-[21px] bg-[#ababab]" />
          </div>
          <Viewer />
          <div className="mt-[4px] flex h-[19px] border-t border-[#d9d9d9] text-[11.500px] leading-[20px]">
            <Fit className="ml-[2px] w-[115px]">No. da página atual: 1</Fit>
            <Separator className="ml-[334px] mt-px h-[16px] bg-[#d4d4d4]" />
            <Fit className="ml-[4px] w-[128px]">No. Total de Páginas: 34</Fit>
            <Separator className="ml-[319px] mt-px h-[16px] bg-[#d4d4d4]" />
            <Fit className="ml-[4px] w-[113px]">Fator de Zoom: 100%</Fit>
            <Separator className="ml-auto mr-[2px] mt-px h-[16px] bg-[#d4d4d4]" />
          </div>
        </div>
        <footer className="mt-[6px] flex h-[27px] border-t border-[#c0c2ca] bg-gradient-to-b from-[#dcdde2] to-[#c8c9d0] text-[11px] leading-[27px] text-[#1d1a38]">
          <Fit className="ml-[7px] w-[132px]">Empresa: 001 - ELETRICAR</Fit>
          <Fit className="ml-[14px] w-[129px]">Usuário: ADMINISTRADOR</Fit>
          <Fit className="ml-[14px] w-[87px]">Data: 10/07/2019</Fit>
          <Fit className="ml-[14px] w-[157px]">Data do Movimento: 10/07/2019</Fit>
          <Fit className="ml-[14px] w-[90px]">Servidor: localhost</Fit>
          <Separator className="ml-auto mr-[19px] mt-[4px] h-[18px] bg-[#999ba8]" />
        </footer>
        <Taskbar />
        <SideTab />
      </div>
    </main>
  );
}
